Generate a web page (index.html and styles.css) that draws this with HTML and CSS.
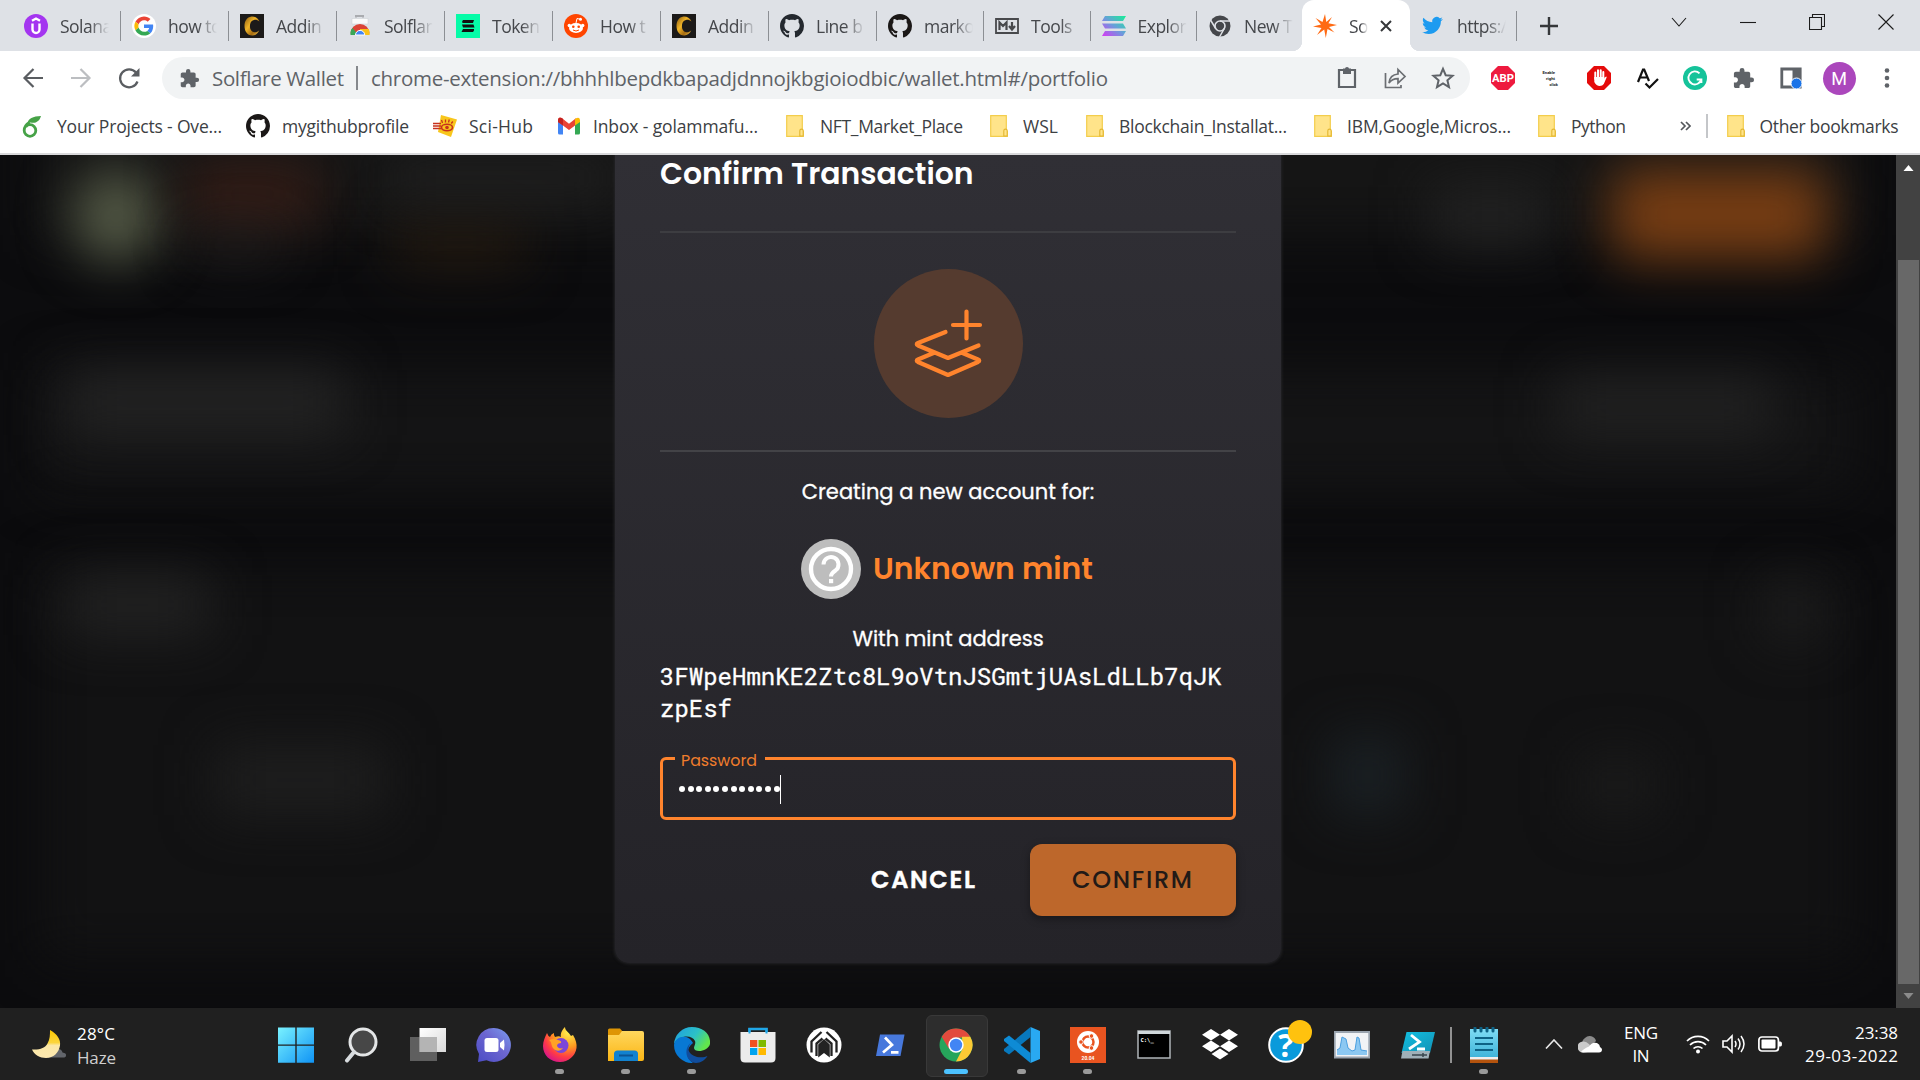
FILE: index.html
```html
<!DOCTYPE html>
<html lang="en">
<head>
<meta charset="utf-8">
<title>Solflare Wallet</title>
<link rel="stylesheet" href="styles.css">
</head>
<body>
<svg class="defs" aria-hidden="true">
  <defs>
    <symbol id="github" viewBox="0 0 16 16"><path d="M8 0C3.58 0 0 3.58 0 8c0 3.54 2.29 6.53 5.47 7.59.4.07.55-.17.55-.38 0-.19-.01-.82-.01-1.49-2.01.37-2.53-.49-2.69-.94-.09-.23-.48-.94-.82-1.13-.28-.15-.68-.52-.01-.53.63-.01 1.08.58 1.23.82.72 1.21 1.87.87 2.33.66.07-.52.28-.87.51-1.07-1.78-.2-3.64-.89-3.64-3.95 0-.87.31-1.59.82-2.15-.08-.2-.36-1.02.08-2.12 0 0 .67-.21 2.2.82.64-.18 1.32-.27 2-.27s1.36.09 2 .27c1.53-1.04 2.2-.82 2.2-.82.44 1.1.16 1.92.08 2.12.51.56.82 1.27.82 2.15 0 3.07-1.87 3.75-3.65 3.95.29.25.54.73.54 1.48 0 1.07-.01 1.93-.01 2.2 0 .21.15.46.55.38A8.01 8.01 0 0 0 16 8c0-4.42-3.58-8-8-8z"/></symbol>
    <symbol id="puzzle" viewBox="0 0 24 24"><path d="M20.5 11H19V7c0-1.1-.9-2-2-2h-4V3.5a2.5 2.5 0 0 0-5 0V5H4c-1.1 0-2 .9-2 2v3.8h1.5c1.49 0 2.7 1.21 2.7 2.7s-1.21 2.7-2.7 2.7H2V20c0 1.1.9 2 2 2h3.8v-1.5c0-1.49 1.21-2.7 2.7-2.7s2.7 1.21 2.7 2.7V22H17c1.1 0 2-.9 2-2v-4h1.5a2.5 2.5 0 0 0 0-5z"/></symbol>
    <symbol id="folder" viewBox="0 0 18 22"><path d="M.7.7h15.6v14.6l1 1v5h-3.6L.7 21.3z" fill="#ffe48a" stroke="#f3cd4c" stroke-width="1.2"/><path d="M13.8 21v-5.2a1.7 1.7 0 0 1 3.4 0V21z" fill="#ffe48a" stroke="#e3b62f" stroke-width="1.1"/></symbol>
    <linearGradient id="gold" x1="0" y1="0" x2="1" y2="1"><stop offset="0" stop-color="#8a5a10"/><stop offset=".4" stop-color="#f0b529"/><stop offset=".7" stop-color="#a56b10"/><stop offset="1" stop-color="#f4c64a"/></linearGradient>
    <symbol id="coin" viewBox="0 0 24 24"><path d="M0 0h24v24H0z" fill="#1c1a19"/><path d="M19.5 7.500C18 4 14.500 2.300 11.500 2.600 6.800 3.200 4.500 7.500 4.500 12c0 5 2.600 9.300 7.500 9.500 3 .2 6-1.700 7.300-5.200-1.800 1.800-3.500 2.200-5.200 1.900-3-.6-4.200-3.200-4.200-6.200s1.300-5.400 4-6c1.900-.4 3.800.1 5.600 1.500z" fill="url(#gold)"/></symbol>
    <linearGradient id="sol" x1="1" y1="0" x2="0" y2="1"><stop offset="0" stop-color="#14f195"/><stop offset=".5" stop-color="#6a9ddb"/><stop offset="1" stop-color="#d838f5"/></linearGradient>
    <linearGradient id="win" gradientUnits="userSpaceOnUse" x1="0" y1="0" x2="36" y2="36"><stop offset="0" stop-color="#7af3ff"/><stop offset="1" stop-color="#0f93f5"/></linearGradient>
    <linearGradient id="chatg" x1="0" y1="1" x2="1" y2="0"><stop offset="0" stop-color="#4b4bc4"/><stop offset=".55" stop-color="#6c66d0"/><stop offset="1" stop-color="#7b9ff0"/></linearGradient>
    <radialGradient id="fox" cx=".75" cy=".15" r=".95"><stop offset="0" stop-color="#fff04e"/><stop offset=".45" stop-color="#ff9a1f"/><stop offset=".75" stop-color="#ff3c45"/><stop offset="1" stop-color="#d6158b"/></radialGradient>
    <linearGradient id="fold" x1="0" y1="0" x2="0" y2="1"><stop offset="0" stop-color="#ffd75e"/><stop offset="1" stop-color="#fbb615"/></linearGradient>
    <linearGradient id="edgeA" x1="0" y1="0" x2="1" y2=".5"><stop offset="0" stop-color="#1d9de2"/><stop offset=".6" stop-color="#2cc1c6"/><stop offset="1" stop-color="#62e64c"/></linearGradient>
    <linearGradient id="moon" x1="0" y1="0" x2="0" y2="1"><stop offset="0" stop-color="#fdc800"/><stop offset=".45" stop-color="#fbd53c"/><stop offset=".55" stop-color="#fbe7a5"/><stop offset="1" stop-color="#fde8b0"/></linearGradient>
    <linearGradient id="note" x1="0" y1="0" x2="0" y2="1"><stop offset="0" stop-color="#7fdcf4"/><stop offset="1" stop-color="#3cb2d8"/></linearGradient>
    <linearGradient id="ise" x1="0" y1="0" x2="1" y2="1"><stop offset="0" stop-color="#12bfe0"/><stop offset="1" stop-color="#1391b5"/></linearGradient>
    <linearGradient id="grey" x1="0" y1="0" x2="1" y2="1"><stop offset="0" stop-color="#ffffff"/><stop offset="1" stop-color="#d9d9d9"/></linearGradient>
  </defs>
</svg>

<header class="tabs">
  <div class="tab"><svg viewBox="0 0 24 24"><circle cx="12" cy="12" r="12" fill="#a435f0"/><path d="M8.500 9.500v6a3.500 3.500 0 0 0 7 0v-6M8 6.700l4-2.200 4 2.200" fill="none" stroke="#fff" stroke-width="2.400"/></svg><span>Solana</span></div>
  <div class="tab"><svg viewBox="-6 -6 60 60"><circle cx="24" cy="24" r="30" fill="#fff"/><path fill="#EA4335" d="M24 9.500c3.540 0 6.710 1.220 9.210 3.600l6.850-6.850C35.900 2.380 30.470 0 24 0 14.620 0 6.510 5.380 2.560 13.220l7.980 6.190C12.430 13.720 17.740 9.500 24 9.500z"/><path fill="#4285F4" d="M46.980 24.550c0-1.570-.15-3.090-.38-4.550H24v9.020h12.940c-.58 2.960-2.260 5.480-4.780 7.180l7.730 6c4.510-4.180 7.090-10.360 7.090-17.650z"/><path fill="#FBBC05" d="M10.530 28.590a14.500 14.500 0 0 1 0-9.180l-7.980-6.190a24 24 0 0 0 0 21.560z"/><path fill="#34A853" d="M24 48c6.480 0 11.930-2.130 15.890-5.810l-7.730-6c-2.150 1.450-4.920 2.300-8.160 2.300-6.260 0-11.570-4.220-13.470-9.910l-7.980 6.190C6.510 42.620 14.620 48 24 48z"/></svg><span>how to</span></div>
  <div class="tab"><svg><use href="#coin"/></svg><span>Addin</span></div>
  <div class="tab"><svg viewBox="0 0 24 24"><path d="M4 4.500h16V10H4z" fill="#fafafa" stroke="#c9ccd1" stroke-width=".5"/><path d="M8 3.500V2h7v1.500" fill="none" stroke="#a9abaf" stroke-width="2"/><path d="M2.500 19.500a9.500 9.500 0 0 1 19 0" fill="#db4437"/><path d="M2.500 21c-.5-5 2-7 2-7l6 7z" fill="#3aa757"/><path d="M12 15h8.600c1.200 2 1 6 1 6H12z" fill="#fbc116"/><path d="M7.500 21a4.600 4.600 0 0 1 9.200 0z" fill="#4285f4" stroke="#fff"/></svg><span>Solflar</span></div>
  <div class="tab"><svg viewBox="0 0 24 24"><path d="M0 0h24v24H0z" fill="#06fca8"/><path d="M7 6h11l-1 3H6.500q-1-1.500.5-3zM6 10.500h11.500l1 3H7zM7 15h11q.5 1.500-1 3H5.500z" fill="#111"/></svg><span>Token</span></div>
  <div class="tab"><svg viewBox="0 0 24 24"><circle cx="12" cy="12" r="12" fill="#ff4500"/><ellipse cx="12" cy="14" rx="7" ry="5" fill="#fff"/><circle cx="5.300" cy="11.500" r="1.700" fill="#fff"/><circle cx="18.700" cy="11.500" r="1.700" fill="#fff"/><circle cx="16.500" cy="5.300" r="1.500" fill="#fff"/><path d="m12 9 1-4.500 3 .7" fill="none" stroke="#fff"/><circle cx="9.300" cy="12.800" r="1.300" fill="#ff4500"/><circle cx="14.700" cy="12.800" r="1.300" fill="#ff4500"/><path d="M9 16q3 2 6 0" fill="none" stroke="#ff4500"/></svg><span>How t</span></div>
  <div class="tab"><svg><use href="#coin"/></svg><span>Addin</span></div>
  <div class="tab"><svg fill="#24292f"><use href="#github"/></svg><span>Line b</span></div>
  <div class="tab mid"><svg fill="#1b1817"><use href="#github"/></svg><span>marko</span></div>
  <div class="tab tight"><svg viewBox="0 0 24 24"><path d="M1 5h22v14H1z" fill="none" stroke="#48494c" stroke-width="1.800"/><path d="M4.500 16V8.500L8 12l3.500-3.500V16M17 8v7m-3-3 3 3.500 3-3.500" fill="none" stroke="#48494c" stroke-width="2.200"/></svg><span>Tools</span></div>
  <div class="tab tight"><svg viewBox="0 0 24 24"><path d="M3 2h21l-3 5H0zM0 9.500h21l3 5H3zM3 17h21l-3 5H0z" fill="url(#sol)"/></svg><span>Explor</span></div>
  <div class="tab tight last"><svg viewBox="0 0 24 24"><circle cx="12" cy="12" r="10.500" fill="#45474b"/><circle cx="12" cy="12" r="5" fill="#45474b" stroke="#dee1e6" stroke-width="1.600"/><path d="M12 7h10M7.700 14.500 2.500 6M16.300 14.500 11.500 23" stroke="#dee1e6" stroke-width="1.500"/></svg><span>New T</span></div>
  <div class="tab active"><svg viewBox="0 0 24 24"><path d="m12 0 1.300 8L19 3l-3.600 6.300L24 11l-8 2 5.500 5.500-7-3.500L12.800 24l-1.600-8.500L4 21l4.500-7L0 12.500l8-2L2.500 4l7 4z" fill="#ff6a13"/></svg><span>So</span><svg class="close" viewBox="0 0 12 12"><path d="m1 1 10 10M11 1 1 11" stroke="#35373a" stroke-width="2"/></svg></div>
  <div class="tab tw"><svg viewBox="0 0 24 24"><path fill="#1d9bf0" d="M23.950 4.570a10 10 0 01-2.820.77 4.960 4.960 0 002.160-2.720c-.95.56-2 .96-3.130 1.180a4.920 4.920 0 00-8.380 4.490C7.690 8.100 4.070 6.130 1.640 3.160a4.820 4.820 0 00-.67 2.480c0 1.710.87 3.210 2.190 4.090a4.900 4.900 0 01-2.230-.61v.06a4.920 4.920 0 003.950 4.830 5 5 0 01-2.210.08 4.940 4.940 0 004.600 3.420A9.870 9.870 0 010 19.540a14 14 0 007.560 2.210c9.050 0 14-7.500 14-13.990l-.02-.63a9.940 9.940 0 002.410-2.560z"/></svg><span>https:/</span></div>
  <svg class="plus" viewBox="0 0 18 18"><path d="M9 0v18M0 9h18" stroke="#35373a" stroke-width="2.400"/></svg>
  <div class="winbtns">
    <svg viewBox="0 0 16 16"><path d="m1 4 7 8 7-8" /></svg>
    <svg viewBox="0 0 16 16"><path d="M0 8.500h16"/></svg>
    <svg viewBox="0 0 16 16"><path d="M.5 3.500h12v12H.5zM3.500 3.500v-3h12v12h-3"/></svg>
    <svg viewBox="0 0 16 16"><path d="m.5.5 15 15M15.500.5l-15 15"/></svg>
  </div>
</header>

<nav class="toolbar">
  <svg class="nav" viewBox="0 0 24 24"><path d="M22 12H4M12.500 3 3.500 12l9 9" stroke="#5a5d61"/></svg>
  <svg class="nav" viewBox="0 0 24 24"><path d="M2 12h18M11.500 3l9 9-9 9" stroke="#bcbec1"/></svg>
  <svg class="nav reload" viewBox="0 0 24 24"><path d="M20.500 15.500a9 9 0 1 1-1.500-9" stroke="#5a5d61"/><path d="M22.500 2v8.500H14z" fill="#5a5d61"/></svg>
  <div class="omnibox">
    <svg class="ext" fill="#5f6368"><use href="#puzzle"/></svg>
    <span class="site" data-w="132">Solflare Wallet</span><i></i><span class="url" data-w="737">chrome-extension://bhhhlbepdkbapadjdnnojkbgioiodbic/wallet.html#/portfolio</span>
    <svg class="act" viewBox="0 0 24 24"><path d="M4 4h16v17H4z" fill="none" stroke="#5f6368" stroke-width="2.200"/><path d="M8 2.500h8V8H8z" fill="#5f6368"/><circle cx="12" cy="3" r="2" fill="#5f6368"/></svg>
    <svg class="act" viewBox="0 0 24 24"><path d="M2.500 7v14.500H18V19M6 17c.5-5.500 3.500-8.500 9-9V3.500l7 7-7 6.500v-4.300c-4 0-7 1.300-9 4.300z" fill="none" stroke="#6b6e72" stroke-width="1.700"/></svg>
    <svg class="act" viewBox="0 0 24 24"><path d="m12 2.800 2.700 6.400 6.900.6-5.200 4.500 1.600 6.800-6-3.600-6 3.600 1.600-6.800-5.200-4.500 6.900-.6z" fill="none" stroke="#5f6368" stroke-width="2"/></svg>
  </div>
  <div class="exts">
    <svg viewBox="0 0 24 24"><path d="M7 0h10l7 7v10l-7 7H7l-7-7V7z" fill="#ee1a3e"/><text x="12" y="16.200" class="abp" textLength="22" lengthAdjust="spacingAndGlyphs">ABP</text></svg>
    <svg viewBox="0 0 24 24"><g class="erc"><text x="3.500" y="7.500" textLength="12.500" lengthAdjust="spacingAndGlyphs">Enable</text><text x="7" y="13.700" textLength="9" lengthAdjust="spacingAndGlyphs">right</text><text x="10.500" y="19.800" textLength="8.500" lengthAdjust="spacingAndGlyphs">click</text></g></svg>
    <svg viewBox="0 0 24 24"><path d="M7 0h10l7 7v10l-7 7H7l-7-7V7z" fill="#e50b0b"/><path d="M8.300 13V6.500M11 12V4.200M13.700 12V4.200M16.300 12V6" stroke="#fff" stroke-width="2" stroke-linecap="round"/><path d="M7.300 11h10v1.500q1-2 2-2 .6.300.2 1.300L16.800 18q-1.300 2-4 2-3.500 0-5.500-4z" fill="#fff"/></svg>
    <svg viewBox="0 0 24 24"><path d="M3 16 8 3.500h1.200L14 15M4.500 11.500h8M10.500 17.500l4 4L23 13" fill="none" stroke="#111" stroke-width="2.200"/></svg>
    <svg viewBox="0 0 24 24"><circle cx="12" cy="12" r="12" fill="#15c39a"/><path d="M16.500 7.300a6.500 6.500 0 1 0 1.700 6.200h-4.500m4.700-.5v4" fill="none" stroke="#fff" stroke-width="1.900"/></svg>
    <svg viewBox="0 0 24 24" fill="#5f6368"><use href="#puzzle" x="1" y="1" width="23" height="23"/></svg>
    <svg viewBox="0 0 24 24"><path d="M2.800 3h18.400v18H2.800z" fill="#fff" stroke="#5f6368" stroke-width="2.800"/><path d="M13.500 3H22v11h-8.500z" fill="#5f6368"/><circle cx="17.500" cy="17.500" r="5.500" fill="#1a73e8" stroke="#fff"/></svg>
    <b class="avatar">M</b>
    <svg viewBox="0 0 24 24" fill="#5f6368"><circle cx="12" cy="4.500" r="2.300"/><circle cx="12" cy="12" r="2.300"/><circle cx="12" cy="19.500" r="2.300"/></svg>
  </div>
</nav>

<nav class="bookmarks">
  <a class="b1"><svg viewBox="0 0 20 24"><path d="M7.500 8.500C3 11 2.200 14 2.200 16.500a5.800 5.800 0 1 0 5.800-5.800c-1.500 0-3 .7-4 1.800" fill="none" stroke="#46a247" stroke-width="2.800"/><path d="M5.500 9.500C6 4.500 11 2.300 19 2c-1.500 5.500-5.500 7.800-10.500 6.500z" fill="#46a247"/></svg><span data-w="165">Your Projects - Ove...</span></a>
  <a class="b2"><svg fill="#1b1817"><use href="#github"/></svg><span data-w="127">mygithubprofile</span></a>
  <a class="b3"><svg viewBox="0 0 24 24"><path d="m8 1 16 4.500L18 23 5 18z" fill="#f8c61c"/><path d="M0 9.500h8M0 12h8M0 14.500h8" stroke="#c8321d" stroke-width="1.500"/><ellipse cx="14" cy="13.500" rx="5.500" ry="3.200" fill="none" stroke="#c8321d" stroke-width="1.600"/><circle cx="14" cy="13.500" r="1.800" fill="#c8321d"/><path d="m9.500 9-1-3m4 2.500V5.500m3 3 .8-3m2 4 1.500-2" stroke="#c8321d" stroke-width="1.300"/></svg><span data-w="64">Sci-Hub</span></a>
  <a class="b4"><svg viewBox="0 0 22 24"><path d="M0 6h5v14.500H1.500Q0 20.500 0 19z" fill="#4285f4"/><path d="M17 6h5v13q0 1.500-1.500 1.500H17z" fill="#34a853"/><path d="M0 6q.5-3.500 3.800-2L11 9.800 18.200 4l-1.200 7.500-6 4.500-6-4.500L0 8z" fill="#ea4335"/><path d="M17 5q4.500-3 5 1v2l-5 3.500z" fill="#fbbc04"/><path d="M0 6q0-2 1.500-2.300Q4 3.500 5 5v6.500L0 8z" fill="#c5221f"/></svg><span data-w="165">Inbox - golammafu...</span></a>
  <a class="b5"><svg><use href="#folder"/></svg><span data-w="143">NFT_Market_Place</span></a>
  <a class="b6"><svg><use href="#folder"/></svg><span data-w="35">WSL</span></a>
  <a class="b7"><svg><use href="#folder"/></svg><span data-w="168">Blockchain_Installat...</span></a>
  <a class="b8"><svg><use href="#folder"/></svg><span data-w="164">IBM,Google,Micros...</span></a>
  <a class="b9"><svg><use href="#folder"/></svg><span data-w="55">Python</span></a>
  <svg class="more" viewBox="0 0 11 10"><path d="m1 1 4 4-4 4M6 1l4 4-4 4" fill="none" stroke="#55585c" stroke-width="1.700"/></svg>
  <i></i>
  <a class="b10"><svg><use href="#folder"/></svg><span data-w="139">Other bookmarks</span></a>
</nav>

<main class="page">
  <div class="backdrop">
    <u class="p1"></u><u class="p2"></u><u class="p3"></u>
    <u class="g1"></u><u class="g2"></u><u class="g3"></u><u class="g4"></u><u class="g5"></u><u class="g6"></u><u class="g7"></u><u class="g8"></u><u class="g9"></u><u class="g10"></u><u class="g11"></u><u class="g12"></u><u class="g13"></u><u class="g14"></u>
  </div>
  <section class="modal">
    <h1>Confirm Transaction</h1>
    <hr>
    <div class="badge"><svg viewBox="0 0 74 74"><path d="M55.500 4.500v27M42 18h27M34.500 25 7 36q-2.500 1.200 0 2.500L37 51l30.500-12.500M22.500 46 7 52.500q-2.500 1.200 0 2.500l30 13 30-13q2.500-1.300 0-2.500L51.500 46" /></svg></div>
    <hr class="second">
    <p class="lead"><span>Creating a new account for:</span></p>
    <div class="mint"><svg viewBox="0 0 60 60"><circle cx="30" cy="30" r="30" fill="#bdbdbd"/><circle cx="30" cy="30" r="20" fill="none" stroke="#fff" stroke-width="4.400"/><path d="M22.500 25.500a7.500 7.500 0 1 1 12 6q-4.500 3-4.500 6" fill="none" stroke="#fff" stroke-width="4"/><path d="M28 40h4.200v4.200H28z" fill="#fff"/></svg><strong>Unknown mint</strong></div>
    <p class="with"><span>With mint address</span></p>
    <div class="addr">3FWpeHmnKE2Ztc8L9oVtnJSGmtjUAsLdLLb7qJK<br>zpEsf</div>
    <fieldset><legend>Password</legend><div class="dots"><i></i><i></i><i></i><i></i><i></i><i></i><i></i><i></i><i></i><i></i><i></i><i></i><b></b></div></fieldset>
    <div class="buttons"><a class="cancel"><span data-w="104">CANCEL</span></a><a class="confirm"><span data-w="120">CONFIRM</span></a></div>
  </section>
  <aside class="scroll"><svg viewBox="0 0 10 6"><path d="M0 6 5 0l5 6z" fill="#fff"/></svg><i></i><svg viewBox="0 0 10 6"><path d="m0 0 5 6 5-6z" fill="#8b8b8b"/></svg></aside>
</main>

<footer class="taskbar">
  <div class="weather"><svg viewBox="0 0 36 30"><path d="M17 27.500q-2-4 4-5 1-5 6-4 4 1 4.500 4 4 .5 3.500 3 0 2-3 2z" fill="#62656b"/><path d="M19 0c7 4 11 9.500 10 15.500-1 7-6.500 12.500-14 12.500C9 28 3 24.500 1 19.500c8 .5 13-1.500 15.500-6C19 9 19 5 19 0z" fill="url(#moon)"/></svg><div><span data-w="38">28°C</span><br><span class="dim" data-w="39">Haze</span></div></div>
  <div class="apps">
    <a><svg viewBox="0 0 36 36"><path d="M0 .5h17.300v17H0zM18.700.5H36v17H18.700zM0 18.800h17.300v17H0zM18.700 18.800H36v17H18.700z" fill="url(#win)"/></svg></a>
    <a><svg viewBox="0 0 36 36"><circle cx="19" cy="15" r="13" fill="#474747" stroke="#e4e6e7" stroke-width="3"/><path d="m10 25-7 8.500" stroke="#d8dcdf" stroke-width="4" stroke-linecap="round"/></svg></a>
    <a><svg viewBox="0 0 36 36"><path d="M9.500 1H36v24H9.500z" fill="url(#grey)"/><path d="M0 10h27v24H0z" fill="#777" opacity=".72"/><path d="M9.500 10H27v15H9.500z" fill="#b4b4b4"/></svg></a>
    <a><svg viewBox="0 0 36 36"><path d="M18 1a17 17 0 1 1-7.500 32.300L2 35l1-8A17 17 0 0 1 18 1z" fill="url(#chatg)"/><rect x="8.500" y="11" width="14" height="14" rx="2.500" fill="#fff"/><path d="m24 16 4-3.500q1 5.500 0 11L24 20z" fill="#fff"/></svg></a>
    <a class="run"><svg viewBox="0 0 36 36"><path d="M5 6q1 3 3 4 1-3 4-4-.5 2 1 4 4-1.500 6 0c-1-4 2-8 4-10 0 4 4 5 6 9l2-1c3 5 4 9 3.500 13A16.500 16.500 0 0 1 18 35C8 35 1 28 1 19 1 14 3 10 5 6z" fill="url(#fox)"/><circle cx="19" cy="18.500" r="7.500" fill="#7b46d9"/><path d="M7 13q5-2 9 0 4 1 3 3-3 0-4 2c0 3 3 4 6 3-2 3-7 4-10 0-2-3-1-6-4-8z" fill="#ffa226"/></svg></a>
    <a class="run"><svg viewBox="0 0 36 36"><path d="M0 3q0-1.500 1.500-1.500H12l3 3.500-3 4H0z" fill="#de9504"/><path d="M0 8h11l3-4h20q2 0 2 2v26q0 2-2 2H0z" fill="url(#fold)"/><path d="M6 34V27q0-3.500 3.500-3.500h17Q30 23.500 30 27v7z" fill="#1282cf"/><path d="M11 28.500h14" stroke="#0b5594" stroke-width="2"/></svg></a>
    <a class="run"><svg viewBox="0 0 36 36"><path d="M18 0A18 18 0 0 0 0 17c5-9 18-10 21-3 1 3-1 5-1 7 0 5 14 4 16-4C37 7 29 0 18 0z" fill="url(#edgeA)"/><path d="M0 18A18 18 0 0 0 19 36C11 31 12 21 19 16 14 6 1 9 0 18z" fill="#0878d4"/><path d="M17 16c-8 5-5 20 5 20 5 0 9-3 11.500-7-6 3-17 1-19-6 0-3 .5-5 2.500-7z" fill="#104d9d"/></svg></a>
    <a><svg viewBox="0 0 36 36"><path d="M9.500 10V2h17v8" fill="none" stroke="#20a7e8" stroke-width="2.500"/><path d="M.5 5h35v26q0 4.500-4.500 4.500H5Q.5 35.500.5 31z" fill="#ececec"/><path d="M9.500 6.500V2h17v4.500" fill="none" stroke="#20a7e8" stroke-width="2"/><path d="M10 13h7.300v7H10z" fill="#f25022"/><path d="M18.500 13H26v7h-7.500z" fill="#7fba00"/><path d="M10 21h7.300v7H10z" fill="#00a4ef"/><path d="M18.500 21H26v7h-7.500z" fill="#ffb900"/></svg></a>
    <a><svg viewBox="0 0 36 36"><circle cx="18" cy="18" r="17.500" fill="#fff"/><path d="M5.500 25.500V14.500L15.500 5M30.500 25.500V14.500L20.500 5M10.500 29V16.500l6-5M25.500 29V16.500l-6-5" fill="none" stroke="#222" stroke-width="2.300"/><path d="M12.200 30.500V17.500L18 12l5.800 5.500v13L18 26z" fill="#222"/></svg></a>
    <a><svg viewBox="0 0 36 36"><path d="M8 7.500h24.500L28.500 29H4z" fill="#4778dc"/><path d="m13 10.500 7 7.300-9 7.700M19 25.300h7.500" fill="none" stroke="#fff" stroke-width="2.700"/></svg></a>
    <a class="current"><svg viewBox="0 0 36 36"><circle cx="18" cy="18" r="16.500" fill="#26a55b"/><path d="M3.700 9.700A16.500 16.500 0 0 1 32.300 9.700L18 11 10.500 21z" fill="#e24a3d"/><path d="M32.300 9.700A16.500 16.500 0 0 1 18 34.500L24.500 22 24 9.700z" fill="#fcc934"/><circle cx="18" cy="18" r="7.700" fill="#fff"/><circle cx="18" cy="18" r="6.200" fill="#4285f4"/></svg></a>
    <a class="run"><svg viewBox="0 0 36 36"><path d="M26.500 0 36 4v28l-9.500 4z" fill="#29a9f2"/><path d="M26.500 0v10L5 27.500 0 24V22z" fill="#0878bd"/><path d="M26.500 36V26L5 8.500 0 12v2z" fill="#0e8bd5"/></svg></a>
    <a class="run"><svg viewBox="0 0 36 36"><path d="M0 0h36v36H0z" fill="#e95420"/><circle cx="18" cy="15" r="11" fill="#fff"/><circle cx="18" cy="15" r="5.500" fill="none" stroke="#e95420" stroke-width="2.500"/><g fill="#e95420" stroke="#fff"><circle cx="11" cy="15" r="2.300"/><circle cx="21.500" cy="9" r="2.300"/><circle cx="21.500" cy="21" r="2.300"/></g><text x="18" y="33" class="ver">20.04</text></svg></a>
    <a><svg viewBox="0 0 36 36"><path d="M2 4h32v27H2z" fill="#000" stroke="#aeb4b8" stroke-width="1.500"/><path d="M2 4h32v3H2z" fill="#cfd6da"/><text x="4.500" y="14.500" class="cmd">C:\_</text></svg></a>
    <a><svg viewBox="0 0 36 36" fill="#fff"><path d="m9 2 9 5.700-9 5.700-9-5.700zM27 2l9 5.700-9 5.700-9-5.700zM9 13.500l9 5.700L9 25l-9-5.800zM27 13.500l9 5.700-9 5.800-9-5.800zM18 21.500l8.500 5.400-8.500 5.600-8.500-5.600z"/></svg></a>
    <a><svg viewBox="0 0 36 36"><circle cx="18" cy="18" r="16.800" fill="#0a9adb" stroke="#fff" stroke-width="2"/><text x="18" y="30" class="q">?</text></svg><i class="dotbadge"></i></a>
    <a><svg viewBox="0 0 36 36"><path d="M.8 5h34.400v25.500H.8z" fill="#f1f3f6" stroke="#9aa4af" stroke-width="1.800"/><path d="M3 28v-5l3-2 2-11 4 2 2 9 4 3 3-1 2-13 2 1 2 12 6 1v4z" fill="#8cc8f2"/><path d="m3 23 3-2 2-11 4 2 2 9 4 3 3-1 2-13 2 1 2 12 6 1" fill="none" stroke="#4a9fe0"/></svg></a>
    <a><svg viewBox="0 0 36 36"><path d="M6.500 5H35l-5 21H1.500z" fill="url(#ise)"/><path d="M2.500 24H30l-1.500 7.500H1z" fill="#9fb0b8"/><path d="m11 8 8.500 7-10.500 7M17 22h8" fill="none" stroke="#fff" stroke-width="2.800"/><path d="M12 28h15m-4-2v4" stroke="#39464d" stroke-width="1.500"/></svg></a>
    <a class="run split"><svg viewBox="0 0 36 36"><path d="M4 2h28v30H4z" fill="url(#note)"/><path d="M4 30h28v3H4z" fill="#eee"/><path d="M4 32.500h28V36H4z" fill="#b4530d"/><path d="M9 11h18M9 17h18M9 23h18" stroke="#0d6285" stroke-width="2"/><path d="M9 1v3M15 1v3M21 1v3M27 1v3" stroke="#0d6285" stroke-width="3" stroke-linecap="round"/></svg></a>
  </div>
  <div class="tray">
    <svg class="chev" viewBox="0 0 18 10"><path d="m1 9.500 8-8.500 8 8.500" fill="none" stroke="#e8e8e8" stroke-width="1.600"/></svg>
    <svg class="cloud" viewBox="0 0 24 18"><path d="M5 10a5.500 5.500 0 0 1 2-7 6.500 6.500 0 0 1 11 3l-8 8z" fill="#8b8b8b"/><path d="M5 17.500a5 5 0 0 1 0-11q3-.5 6.500 3l3 7z" fill="#cbcbcb"/><path d="M3 17q2-3 8-5.500 3-5 8-3.500 3 1.500 3 4 2 1 2 2.500 0 3-3 3H5z" fill="#fff"/></svg>
    <div class="lang"><span data-w="34">ENG</span><br><span data-w="17">IN</span></div>
    <svg class="t1" viewBox="0 0 24 20"><path d="M1 7a15.500 15.500 0 0 1 22 0M4 11a11.300 11.300 0 0 1 16 0M7.500 14.500a6.600 6.600 0 0 1 9 0" fill="none" stroke="#fff" stroke-width="1.700"/><circle cx="12" cy="17.500" r="2" fill="#fff"/></svg>
    <svg class="t2" viewBox="0 0 24 20"><path d="M1 7h4l5-5v16l-5-5H1z" fill="none" stroke="#fff" stroke-width="1.600"/><path d="M13 7q2 3 0 6M16 4.500q4 5.500 0 11M19 2q6 8 0 16" fill="none" stroke="#fff" stroke-width="1.500"/></svg>
    <svg class="t3" viewBox="0 0 24 20"><rect x=".9" y="3" width="19.500" height="14" rx="3" fill="none" stroke="#fff" stroke-width="1.700"/><rect x="3.500" y="5.500" width="14" height="9" rx="1" fill="#fff"/><path d="M21 7.500h1.500q1.500 0 1.500 2.500t-1.500 2.500H21z" fill="#fff"/></svg>
    <div class="clock"><span data-w="43">23:38</span><br><span data-w="93">29-03-2022</span></div>
  </div>
</footer>
<script src="fit.js"></script>
</body>
</html>
```
FILE: fit.js
```js
// Tracks each label so that it fills the width given in data-w.
document.querySelectorAll('[data-w]').forEach(function (el) {
  var width = parseFloat(el.dataset.w);
  var count = el.textContent.length;
  var natural = el.getBoundingClientRect().width;
  var track = (width - natural) / (count - 1);
  el.style.letterSpacing = track.toFixed(3) + 'px';
  el.style.marginRight = (-track).toFixed(3) + 'px';
});
```
FILE: styles.css
```css
* { box-sizing: border-box; }
body { margin: 0; width: 1920px; height: 1080px; overflow: hidden; background: #0d0d0f; font-family: "Segoe UI", "Open Sans", "Noto Sans", sans-serif; display: flex; flex-direction: column; }
svg { display: block; flex: none; }
span, strong { white-space: nowrap; }
[data-w] { display: inline-block; }
.defs { position: absolute; width: 0; height: 0; }

/* tab strip */
.tabs { height: 51px; background: #dee1e6; display: flex; align-items: center; padding-left: 13px; flex: none; font-size: 17.5px; letter-spacing: -.5px; color: #45474b; }
.tab { width: 108px; height: 30px; display: flex; align-items: center; gap: 12px; padding-left: 11px; border-right: 1.5px solid #8c8f94; flex: none; }
.tab svg { width: 24px; height: 24px; }
.tab span { width: 49px; overflow: hidden; -webkit-mask-image: linear-gradient(to right, #000 60%, transparent); mask-image: linear-gradient(to right, #000 60%, transparent); }
.tab.mid { width: 107px; }
.tab.tight { width: 106.5px; }
.tab.last { width: 105px; border: 0; }
.tab.active { position: relative; width: 108px; height: 51px; background: #fff; border: 0; border-radius: 12px 12px 0 0; }
.tab.active::before, .tab.active::after { content: ""; position: absolute; bottom: 0; width: 10px; height: 10px; }
.tab.active::before { left: -10px; background: radial-gradient(circle at 0 0, transparent 10px, #fff 10.5px); }
.tab.active::after { right: -10px; background: radial-gradient(circle at 100% 0, transparent 10px, #fff 10.5px); }
.tab.active span { width: 19px; }
.tab.active .close { width: 12px; height: 12px; margin-left: 0; }
.tab.tw { width: 107px; gap: 14px; }
.tab.tw svg { width: 21px; height: 21px; margin-left: 1px; }
.plus { width: 18px; height: 18px; margin-left: 23px; }
.winbtns { display: flex; gap: 53px; margin: -7px 0 0 113px; }
.winbtns svg { width: 16px; height: 16px; fill: none; stroke: #1c1c1c; stroke-width: 1.1; }

/* toolbar */
.toolbar { height: 57px; background: #fff; display: flex; align-items: center; padding: 0 0 3px 21px; flex: none; }
.nav { width: 24px; height: 24px; margin-right: 24px; fill: none; stroke-width: 2.2; }
.nav.reload { margin-right: 21px; }
.omnibox { width: 1308px; height: 42px; border-radius: 21px; background: #f1f3f4; display: flex; align-items: center; color: #5f6368; font-size: 20.5px; }
.ext { width: 21px; height: 21px; margin: 0 12px 0 17px; }
.omnibox i { width: 2px; height: 24px; background: #85888c; margin: 0 13px 0 12px; }
.omnibox span { margin-bottom: 1px; }
.act { width: 24px; height: 24px; }
.url + .act { margin-left: auto; }
.act { margin-right: 24px; }
.act:last-child { margin-right: 15px; }
.exts { display: flex; align-items: center; gap: 24px; padding-left: 21px; }
.exts svg { width: 24px; height: 24px; }
.abp { font: 700 11px "Roboto", sans-serif; fill: #fff; text-anchor: middle; }
.erc { font: 700 3.8px "Roboto", sans-serif; fill: #222; }
.avatar { width: 33px; height: 33px; border-radius: 50%; background: #ab47bc; color: #fff; font: 400 18px/33px "Roboto", sans-serif; text-align: center; margin: 0 -4.5px; }

/* bookmarks */
.bookmarks { height: 47px; background: #fff; border-bottom: 2px solid #d9d9db; padding-left: 22px; padding-bottom: 9px; display: flex; align-items: center; font-size: 17.5px; color: #3c4043; flex: none; }
.bookmarks span { margin-top: -1px; }
.bookmarks a { display: flex; align-items: center; flex: none; }
.bookmarks a svg { width: 18px; height: 22px; margin-right: 16px; }
.bookmarks .b1 { width: 224px; }
.bookmarks .b1 svg { width: 20px; height: 24px; margin-right: 15px; }
.bookmarks .b2 { width: 187px; }
.bookmarks .b2 svg, .bookmarks .b3 svg { width: 24px; height: 24px; margin-right: 12px; }
.bookmarks .b3 { width: 125px; }
.bookmarks .b4 { width: 228px; }
.bookmarks .b4 svg { width: 22px; height: 24px; margin-right: 13px; }
.b5 { width: 204px; }
.b6 { width: 96px; }
.b7 { width: 228px; }
.bookmarks .b7 svg, .bookmarks .b8 svg, .bookmarks .b10 svg, .bookmarks .b9 svg, .bookmarks .b6 svg { margin-right: 15px; }
.b8 { width: 224px; }
.b9 { width: 142px; }
.more { width: 11px; height: 10px; }
.bookmarks i { width: 1.5px; height: 24px; background: #c4c6c9; margin: 0 19px 0 15px; }

/* page */
.page { position: relative; height: 853px; flex: none; overflow: hidden; background: #0c0c0e; display: flex; }
.backdrop { position: absolute; inset: 0; overflow: hidden; }
.backdrop u { position: absolute; filter: blur(26px); }
.backdrop .p1 { left: 40px; top: -60px; width: 1815px; height: 140px; background: #151515; }
.backdrop .p2 { left: 40px; top: 215px; width: 1815px; height: 120px; background: #141415; }
.backdrop .p3 { left: 40px; top: 415px; width: 1815px; height: 390px; background: #121213; }
.backdrop .g1 { left: 72px; top: 15px; width: 88px; height: 92px; background: #555b47; border-radius: 50%; }
.backdrop .g2 { left: 185px; top: 5px; width: 135px; height: 68px; background: #321c16; }
.backdrop .g3 { left: 395px; top: 62px; width: 130px; height: 50px; background: #221910; }
.backdrop .g4 { left: 1430px; top: 30px; width: 120px; height: 60px; background: #222; }
.backdrop .g5 { left: 1612px; top: 14px; width: 214px; height: 90px; background: #773d13; border-radius: 16px; }
.backdrop .g6 { left: 65px; top: 215px; width: 280px; height: 65px; background: #232323; }
.backdrop .g7 { left: 1555px; top: 222px; width: 220px; height: 60px; background: #212121; }
.backdrop .g8 { left: 65px; top: 420px; width: 145px; height: 60px; background: #222; }
.backdrop .g9 { left: 1765px; top: 425px; width: 55px; height: 60px; background: #1e1e1e; }
.backdrop .g10 { left: 215px; top: 590px; width: 170px; height: 70px; background: #1e1e1e; }
.backdrop .g11 { left: 1330px; top: 580px; width: 75px; height: 80px; background: #1a2024; }
.backdrop .g12 { left: 1580px; top: 600px; width: 75px; height: 60px; background: #1b1b1b; }
.backdrop .g13 { left: 190px; top: 80px; width: 90px; height: 22px; background: #222; }
.backdrop .g14 { left: 385px; top: 0; width: 230px; height: 45px; background: #202020; }

.modal { position: relative; width: 666px; height: 808px; margin-left: 615px; padding: 0 45px; border-radius: 0 0 14px 14px; background: linear-gradient(#302f35, #242328); box-shadow: 0 0 3px 1px #242427; color: #fff; font-family: "Poppins", sans-serif; }
.modal h1 { margin: 0 0 40px; padding-top: 1px; font-size: 29.9px; font-weight: 600; line-height: 35px; }
.modal hr { margin: 0; border: 0; height: 2px; background: #3d3d41; }
.badge { width: 149px; height: 149px; border-radius: 50%; background: #553b2f; margin: 36px auto 32px; display: flex; align-items: center; justify-content: center; }
.badge svg { width: 74px; height: 74px; fill: none; stroke: #ff842d; stroke-width: 4.2; stroke-linecap: round; stroke-linejoin: round; }
.modal hr.second { background: #434347; }
.modal p { margin: 25px 0 32px; font-size: 21px; line-height: 30px; text-align: center; -webkit-text-stroke: .3px #fff; }
.mint { display: flex; align-items: center; height: 60px; gap: 12px; padding-left: 141px; }
.mint svg { width: 60px; height: 60px; }
.mint strong { color: #ff842d; font-size: 29.9px; font-weight: 600; line-height: 36px; }
.modal p.with { margin: 25px 0 6px; }
.addr { font: 24px/32px "Roboto Mono", "DejaVu Sans Mono", monospace; height: 64px; -webkit-text-stroke: .3px #fff; }
fieldset { position: relative; margin: 33px 0 24px; padding: 0; min-width: 0; height: 63px; border: 3px solid #ff842d; border-radius: 6px; }
legend { position: absolute; left: 12px; top: -8px; width: 90px; height: 18px; padding: 0 0 0 6px; background: #27262b; font-size: 15.8px; line-height: 18px; color: #f07d2c; }
.dots { display: flex; align-items: center; gap: 2.6px; height: 58px; padding-left: 16px; }
.dots i { width: 6px; height: 6px; border-radius: 50%; background: #fff; }
.dots b { width: 1px; height: 29px; background: #fff; margin-left: -2px; }
.buttons { display: flex; height: 72px; font-size: 24px; line-height: 71px; }
.cancel { margin-left: 211px; width: 159px; font-weight: 600; }
.cancel span { -webkit-text-stroke: .4px #fff; }
.confirm { width: 206px; padding-left: 42px; border-radius: 12px; background: #bd672b; color: #221a17; font-weight: 500; box-shadow: 0 3px 8px rgba(0, 0, 0, .35); }

.scroll { position: absolute; right: 0; top: 0; bottom: 0; width: 24px; background: #424242; display: flex; flex-direction: column; align-items: center; padding: 10px 0 9px; }
.scroll svg { width: 11px; height: 6px; }
.scroll i { width: 21px; height: 724px; margin: 89px 0 auto; background: #686868; }

/* taskbar */
.taskbar { height: 72px; background: #202020; display: flex; flex: none; color: #fff; font-size: 17px; }
.weather { width: 263px; padding: 14px 0 0 31px; display: flex; gap: 10px; line-height: 24px; }
.weather svg { width: 36px; height: 30px; margin-top: 8px; }
.dim { color: #cfcfcf; }
.apps { display: flex; }
.apps a { position: relative; width: 66px; height: 72px; display: flex; justify-content: center; align-items: center; padding-top: 3px; }
.apps a > svg { width: 36px; height: 36px; margin: 0 1px 2px 0; z-index: 1; }
.apps .run::after, .apps .current::after { content: ""; position: absolute; z-index: 2; left: 28px; bottom: 6px; width: 9px; height: 5px; border-radius: 3px; background: #9a9a9a; }
.apps .current::after { left: 21px; width: 24px; background: #4cc2ff; }
.apps .current::before { content: ""; position: absolute; left: 3px; top: 7px; width: 60px; height: 60px; border-radius: 6px; background: #2d2d2d; border: 1px solid #393939; }
.apps .split::before { content: ""; position: absolute; left: -1px; top: 19px; width: 2px; height: 36px; background: #929292; }
.dotbadge { position: absolute; z-index: 2; right: 7px; top: 12px; width: 24px; height: 24px; border-radius: 50%; background: #ffc20e; }
.ver { font: 700 5px "Roboto", sans-serif; fill: #fff; text-anchor: middle; }
.cmd { font: 700 5.5px "DejaVu Sans Mono", monospace; fill: #fff; }
.q { font: 700 32px "Open Sans", sans-serif; fill: #fff; text-anchor: middle; }
.tray { display: flex; align-items: center; flex: 1; padding-left: 28px; }
.chev { width: 18px; height: 10px; }
.cloud { width: 24px; height: 18px; margin: 0 22px 0 15px; }
.lang { width: 34px; text-align: center; line-height: 23px; margin-right: 28px; }
.t1, .t2, .t3 { width: 24px; height: 20px; margin-right: 12px; }
.t3 { margin-right: 0; }
.clock { flex: 1; text-align: right; padding-right: 22px; line-height: 23px; }
```
